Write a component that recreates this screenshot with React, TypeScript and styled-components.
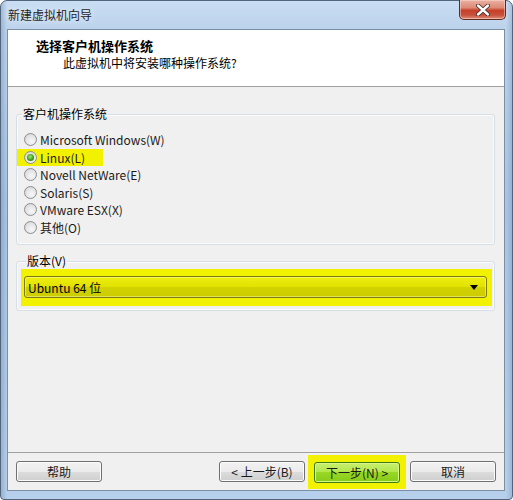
import { createGlobalStyle, styled } from "styled-components";

const GlobalStyle = createGlobalStyle`
  html, body {
    margin: 0;
    padding: 0;
    background: #ffffff;
  }
  body {
    font-family: "Noto Sans CJK SC", "Noto Sans", sans-serif;
    font-size: 12px;
    color: #000000;
  }
`;

const osList = [
  "Microsoft Windows(W)",
  "Linux(L)",
  "Novell NetWare(E)",
  "Solaris(S)",
  "VMware ESX(X)",
  "其他(O)",
];

const App = () => {
  return (
    <>
      <GlobalStyle />
      <Window>
        <TitleBar>
          <TitleText>新建虚拟机向导</TitleText>
          <CloseButton>
            <svg width="14" height="12" viewBox="0 0 14 12">
              <path
                d="M2 1.5 L12 10.5 M12 1.5 L2 10.5"
                stroke="#3b2622"
                strokeWidth="4"
                strokeLinecap="round"
              />
              <path
                d="M2 1.5 L12 10.5 M12 1.5 L2 10.5"
                stroke="#ffffff"
                strokeWidth="2.4"
                strokeLinecap="round"
              />
            </svg>
          </CloseButton>
        </TitleBar>
        <Client>
          <Header>
            <HeaderTitle>选择客户机操作系统</HeaderTitle>
            <HeaderSub>此虚拟机中将安装哪种操作系统?</HeaderSub>
          </Header>
          <Body>
            <Group>
              <Legend>客户机操作系统</Legend>
              {osList.map((name) => (
                <RadioRow key={name} $marked={name === "Linux(L)"}>
                  <RadioDot $checked={name === "Linux(L)"} />
                  {name}
                </RadioRow>
              ))}
            </Group>
            <VersionGroup>
              <Legend>版本(V)</Legend>
              <ComboMark>
                <Combo>
                  <span>Ubuntu 64 位</span>
                  <svg width="8" height="5" viewBox="0 0 8 5">
                    <path d="M0 0 H8 L4 5 Z" fill="#000000" />
                  </svg>
                </Combo>
              </ComboMark>
            </VersionGroup>
          </Body>
          <Footer>
            <Button>帮助</Button>
            <Spacer />
            <Button>&lt; 上一步(B)</Button>
            <ButtonMark>
              <Button $primary>下一步(N) &gt;</Button>
            </ButtonMark>
            <Button>取消</Button>
          </Footer>
        </Client>
      </Window>
    </>
  );
};

const Window = styled.div`
  box-sizing: border-box;
  width: 513px;
  height: 500px;
  display: flex;
  flex-direction: column;
  padding: 0 7px 8px 6px;
  border: 1px solid #52657d;
  border-radius: 7px 7px 4px 4px;
  background:
    linear-gradient(to right, rgba(60, 90, 130, 0.25) 0, rgba(60, 90, 130, 0) 6px),
    linear-gradient(to left, rgba(60, 90, 130, 0.2) 0, rgba(60, 90, 130, 0) 6px),
    linear-gradient(to bottom, #c9ddf3 0, #bcd3ec 28px, #a9c6e6 200px, #b6cfea 480px);
`;

const TitleBar = styled.div`
  height: 28px;
  display: flex;
  align-items: flex-start;
  padding-left: 1px;
`;

const TitleText = styled.div`
  line-height: 28px;
  font-size: 12px;
  color: #1e1e1e;
  text-shadow: 0 0 6px rgba(255, 255, 255, 0.9);
`;

const CloseButton = styled.div`
  box-sizing: border-box;
  margin-left: auto;
  margin-right: -1px;
  margin-top: -1px;
  width: 47px;
  height: 20px;
  display: flex;
  align-items: center;
  justify-content: center;
  border: 1px solid #5e2c24;
  border-top: none;
  border-radius: 0 0 5px 5px;
  background: linear-gradient(
    to bottom,
    #eab2a4 0,
    #dd8a76 40%,
    #c6402a 55%,
    #c8523c 80%,
    #e0907c 100%
  );
  box-shadow: inset 0 0 0 1px rgba(255, 220, 210, 0.5);
`;

const Client = styled.div`
  flex: 1;
  display: flex;
  flex-direction: column;
  background: #f0f0f0;
  border: 1px solid #7c8ea4;
`;

const Header = styled.div`
  box-sizing: border-box;
  height: 57px;
  padding: 7px 0 0 28px;
  background: #ffffff;
  border-bottom: 1px solid #a0a0a0;
`;

const HeaderTitle = styled.div`
  font-size: 13px;
  font-weight: bold;
  line-height: 18px;
`;

const HeaderSub = styled.div`
  padding-left: 27px;
  line-height: 16px;
`;

const Body = styled.div`
  flex: 1;
  padding: 20px 9px 0 8px;
  display: flex;
  flex-direction: column;
`;

const Group = styled.fieldset`
  margin: 0;
  padding: 10px 8px 8px 0;
  border: 1px solid #d5dfe5;
  border-radius: 3px;
  box-shadow: inset 0 0 0 1px #fbfbfb;
`;

const VersionGroup = styled(Group)`
  margin-top: 9px;
  padding: 1px 2px 4px 4px;
`;

const Legend = styled.legend`
  margin-left: 5px;
  padding: 0 1px;
  line-height: 14px;
  font-size: 12px;
`;

const RadioRow = styled.div<{ $marked?: boolean }>`
  box-sizing: border-box;
  width: fit-content;
  height: 17.5px;
  display: flex;
  align-items: center;
  gap: 3px;
  padding: 0 ${(p) => (p.$marked ? "18px" : "0")} 0 7px;
  background: ${(p) => (p.$marked ? "#f2f200" : "transparent")};
  color: #1a1a1a;
`;

const RadioDot = styled.span<{ $checked?: boolean }>`
  box-sizing: border-box;
  width: 13px;
  height: 13px;
  border-radius: 50%;
  border: 1px solid #8c8f91;
  background: radial-gradient(circle at 60% 65%, #f7f7f7 0, #e4e4e4 55%, #cdcdcd 100%);
  display: flex;
  align-items: center;
  justify-content: center;
  &::after {
    content: "";
    display: ${(p) => (p.$checked ? "block" : "none")};
    width: 7px;
    height: 7px;
    border-radius: 50%;
    background: radial-gradient(circle at 45% 40%, #9df06a 0, #3f9d1d 55%, #1d5a0c 100%);
  }
`;

const ComboMark = styled.div`
  padding: 7px 5px 8px 3px;
  background: #f2f200;
`;

const Combo = styled.div`
  box-sizing: border-box;
  height: 22px;
  display: flex;
  align-items: center;
  justify-content: space-between;
  padding: 0 8px 0 3px;
  border: 1px solid #7d7a12;
  border-radius: 3px;
  background: linear-gradient(to bottom, #eeee10 0, #e2e200 50%, #d2d200 50%, #cccc00 100%);
  box-shadow: inset 0 0 0 1px rgba(255, 255, 200, 0.45);
`;

const Footer = styled.div`
  box-sizing: border-box;
  height: 38px;
  display: flex;
  align-items: center;
  padding: 0 8px 0 8px;
  border-top: 1px solid #a0a0a0;
`;

const Spacer = styled.div`
  flex: 1;
`;

const Button = styled.div<{ $primary?: boolean }>`
  box-sizing: border-box;
  width: 86px;
  height: 21px;
  display: flex;
  align-items: center;
  justify-content: center;
  border-radius: 3px;
  border: 1px solid ${(p) => (p.$primary ? "#3c7a12" : "#707070")};
  background: ${(p) =>
    p.$primary
      ? "linear-gradient(to bottom, #c8f06e 0, #b2e64a 50%, #98d824 50%, #86cb18 100%)"
      : "linear-gradient(to bottom, #f2f2f2 0, #ebebeb 50%, #dddddd 50%, #cfcfcf 100%)"};
  box-shadow: inset 0 0 0 1px ${(p) => (p.$primary ? "#d8f88a" : "#fcfcfc")};
  color: #1a1a1a;
  font-size: 12px;
`;

const ButtonMark = styled.div`
  margin: 0 4px 0 3px;
  padding: 7px 6px 6px 6px;
  background: #f2f200;
  display: flex;
`;

export default App;
